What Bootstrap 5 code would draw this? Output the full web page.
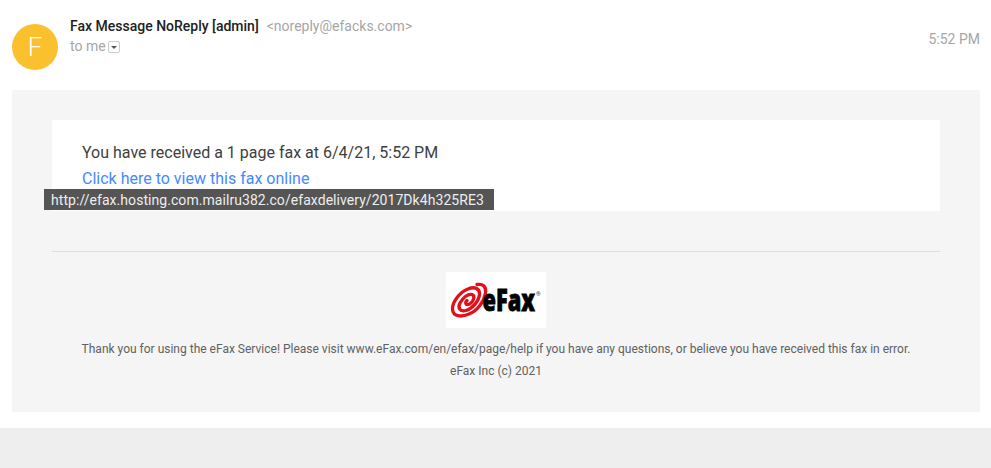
<!DOCTYPE html>
<html lang="en">
<head>
<meta charset="utf-8">
<meta name="viewport" content="width=device-width, initial-scale=1">
<title>Fax Message</title>
<link href="https://cdn.jsdelivr.net/npm/bootstrap@5.3.0/dist/css/bootstrap.min.css" rel="stylesheet">
<style>
body{font-family:Roboto,"Liberation Sans",sans-serif;background:#eee;font-size:14px;line-height:20px;color:#212121}
.message{height:428px;padding:0 11px 0 12px}
.message-head{height:90px;padding-top:16px}
.avatar{width:46px;height:46px;margin-top:8px;margin-right:12px;background:#fbc02d;color:#fff;font-size:26px;font-weight:300}
.sender{font-weight:500}
.muted{color:#a6a6a6}
.details{width:12px;height:12px;border:1px solid #ccc;border-radius:2px;margin:2px 0 0 2px}
.time{padding-top:13px}
.mail-body{height:322px;background:#f5f5f5;padding:30px 40px 0}
.notice{height:91px;padding:20px 30px 0;font-size:16px;line-height:26px;color:#404040}
.notice a{color:#448aff}
.link-preview{left:-8px;top:69px;width:450px;height:21px;padding-left:7px;background:#555;color:#eee;font-size:14px;letter-spacing:.055px;line-height:22px;white-space:nowrap}
.mail-foot{margin-top:40px;border-top:1px solid #dedede;padding-top:20px;font-size:12px;line-height:22px;color:#616161}
.brand{width:100px;height:56px;margin-bottom:10px}
.wordmark{font-family:"Open Sans",sans-serif;font-weight:800;font-size:30px;stroke:#000;stroke-width:.8px}
</style>
<script src="https://cdn.jsdelivr.net/npm/bootstrap@5.3.0/dist/js/bootstrap.bundle.min.js"></script>
</head>
<body>
<main class="message bg-white">
  <header class="message-head d-flex align-items-start">
    <div class="avatar rounded-circle d-flex align-items-center justify-content-center">F</div>
    <div class="flex-grow-1">
      <div class="d-flex"><span class="sender">Fax Message NoReply [admin]</span><span class="muted ms-2">&lt;noreply@efacks.com&gt;</span></div>
      <div class="d-flex align-items-center"><span class="muted">to me</span><span class="details d-flex align-items-center justify-content-center"><svg width="6" height="3" viewBox="0 0 6 3"><path d="M0 0h6L3 3z" fill="#555"/></svg></span></div>
    </div>
    <div class="time muted">5:52 PM</div>
  </header>
  <section class="mail-body">
    <div class="notice bg-white position-relative">
      <div>You have received a 1 page fax at 6/4/21, 5:52 PM</div>
      <a href="#" class="text-decoration-none">Click here to view this fax online</a>
      <div class="link-preview position-absolute">http://efax.hosting.com.mailru382.co/efaxdelivery/2017Dk4h325RE3</div>
    </div>
    <footer class="mail-foot text-center">
      <svg class="brand d-block mx-auto bg-white" viewBox="0 0 100 56" role="img" aria-label="eFax">
        <path d="M31 12.500C37 11.500 40.500 14.500 39.500 21C38 30 31 39 23 42C15 45.500 7 44.500 6.500 37.500C6 30 14 20 22 17C29 14 34 17 33.500 22.500C33 29 26 37 20 38.500C14 40 11.500 36 14 31C16.500 26 22 21.500 26 22.500C30 24 27 30.500 23.500 32C20 33.500 18.500 31 21 28.500" fill="none" stroke="#e2101b" stroke-width="3.300" stroke-linecap="round" stroke-linejoin="round"/>
        <text class="wordmark" x="36.500" y="39" textLength="52.500" lengthAdjust="spacingAndGlyphs">eFax</text>
        <text x="90" y="24" font-size="6" fill="#333">®</text>
      </svg>
      <div>Thank you for using the eFax Service! Please visit www.eFax.com/en/efax/page/help if you have any questions, or believe you have received this fax in error.</div>
      <div>eFax Inc (c) 2021</div>
    </footer>
  </section>
</main>
</body>
</html>
